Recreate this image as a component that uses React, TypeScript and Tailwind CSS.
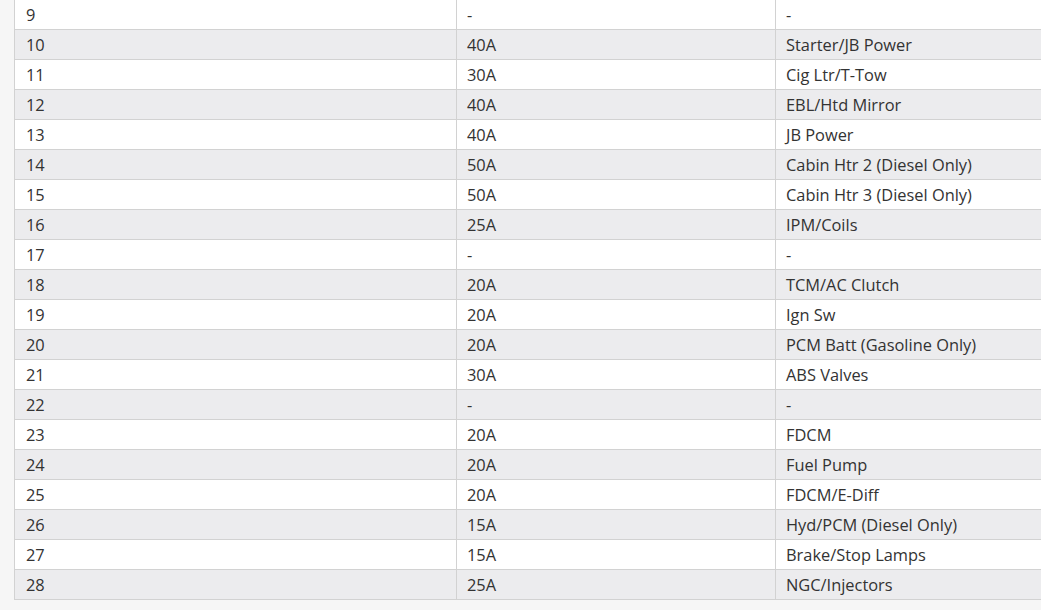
const rows: [string, string, string][] = [
  ['9', '-', '-'],
  ['10', '40A', 'Starter/JB Power'],
  ['11', '30A', 'Cig Ltr/T-Tow'],
  ['12', '40A', 'EBL/Htd Mirror'],
  ['13', '40A', 'JB Power'],
  ['14', '50A', 'Cabin Htr 2 (Diesel Only)'],
  ['15', '50A', 'Cabin Htr 3 (Diesel Only)'],
  ['16', '25A', 'IPM/Coils'],
  ['17', '-', '-'],
  ['18', '20A', 'TCM/AC Clutch'],
  ['19', '20A', 'Ign Sw'],
  ['20', '20A', 'PCM Batt (Gasoline Only)'],
  ['21', '30A', 'ABS Valves'],
  ['22', '-', '-'],
  ['23', '20A', 'FDCM'],
  ['24', '20A', 'Fuel Pump'],
  ['25', '20A', 'FDCM/E-Diff'],
  ['26', '15A', 'Hyd/PCM (Diesel Only)'],
  ['27', '15A', 'Brake/Stop Lamps'],
  ['28', '25A', 'NGC/Injectors'],
]

export default function App() {
  return (
    <div
      className="w-[1041px] h-[610px] overflow-hidden bg-[#f6f6f6] text-[#333] text-[16.4px]"
      style={{ fontFamily: '"Open Sans", "Noto Sans", sans-serif' }}
    >
      <div className="ml-[14px] w-[1100px] border-l border-[#d2d2d2]">
        {rows.map((r, i) => (
          <div
            key={r[0]}
            className={`grid grid-cols-[442px_319px_1fr] h-[30px] border-b border-[#d2d2d2] ${
              i % 2 === 1 ? 'bg-[#ececee]' : 'bg-white'
            }`}
          >
            <div className="border-r border-[#d2d2d2] pl-[11px] pt-[2px] flex items-center">{r[0]}</div>
            <div className="border-r border-[#d2d2d2] pl-[10px] pt-[2px] flex items-center">{r[1]}</div>
            <div className="pl-[10px] pt-[2px] flex items-center">{r[2]}</div>
          </div>
        ))}
      </div>
    </div>
  )
}
